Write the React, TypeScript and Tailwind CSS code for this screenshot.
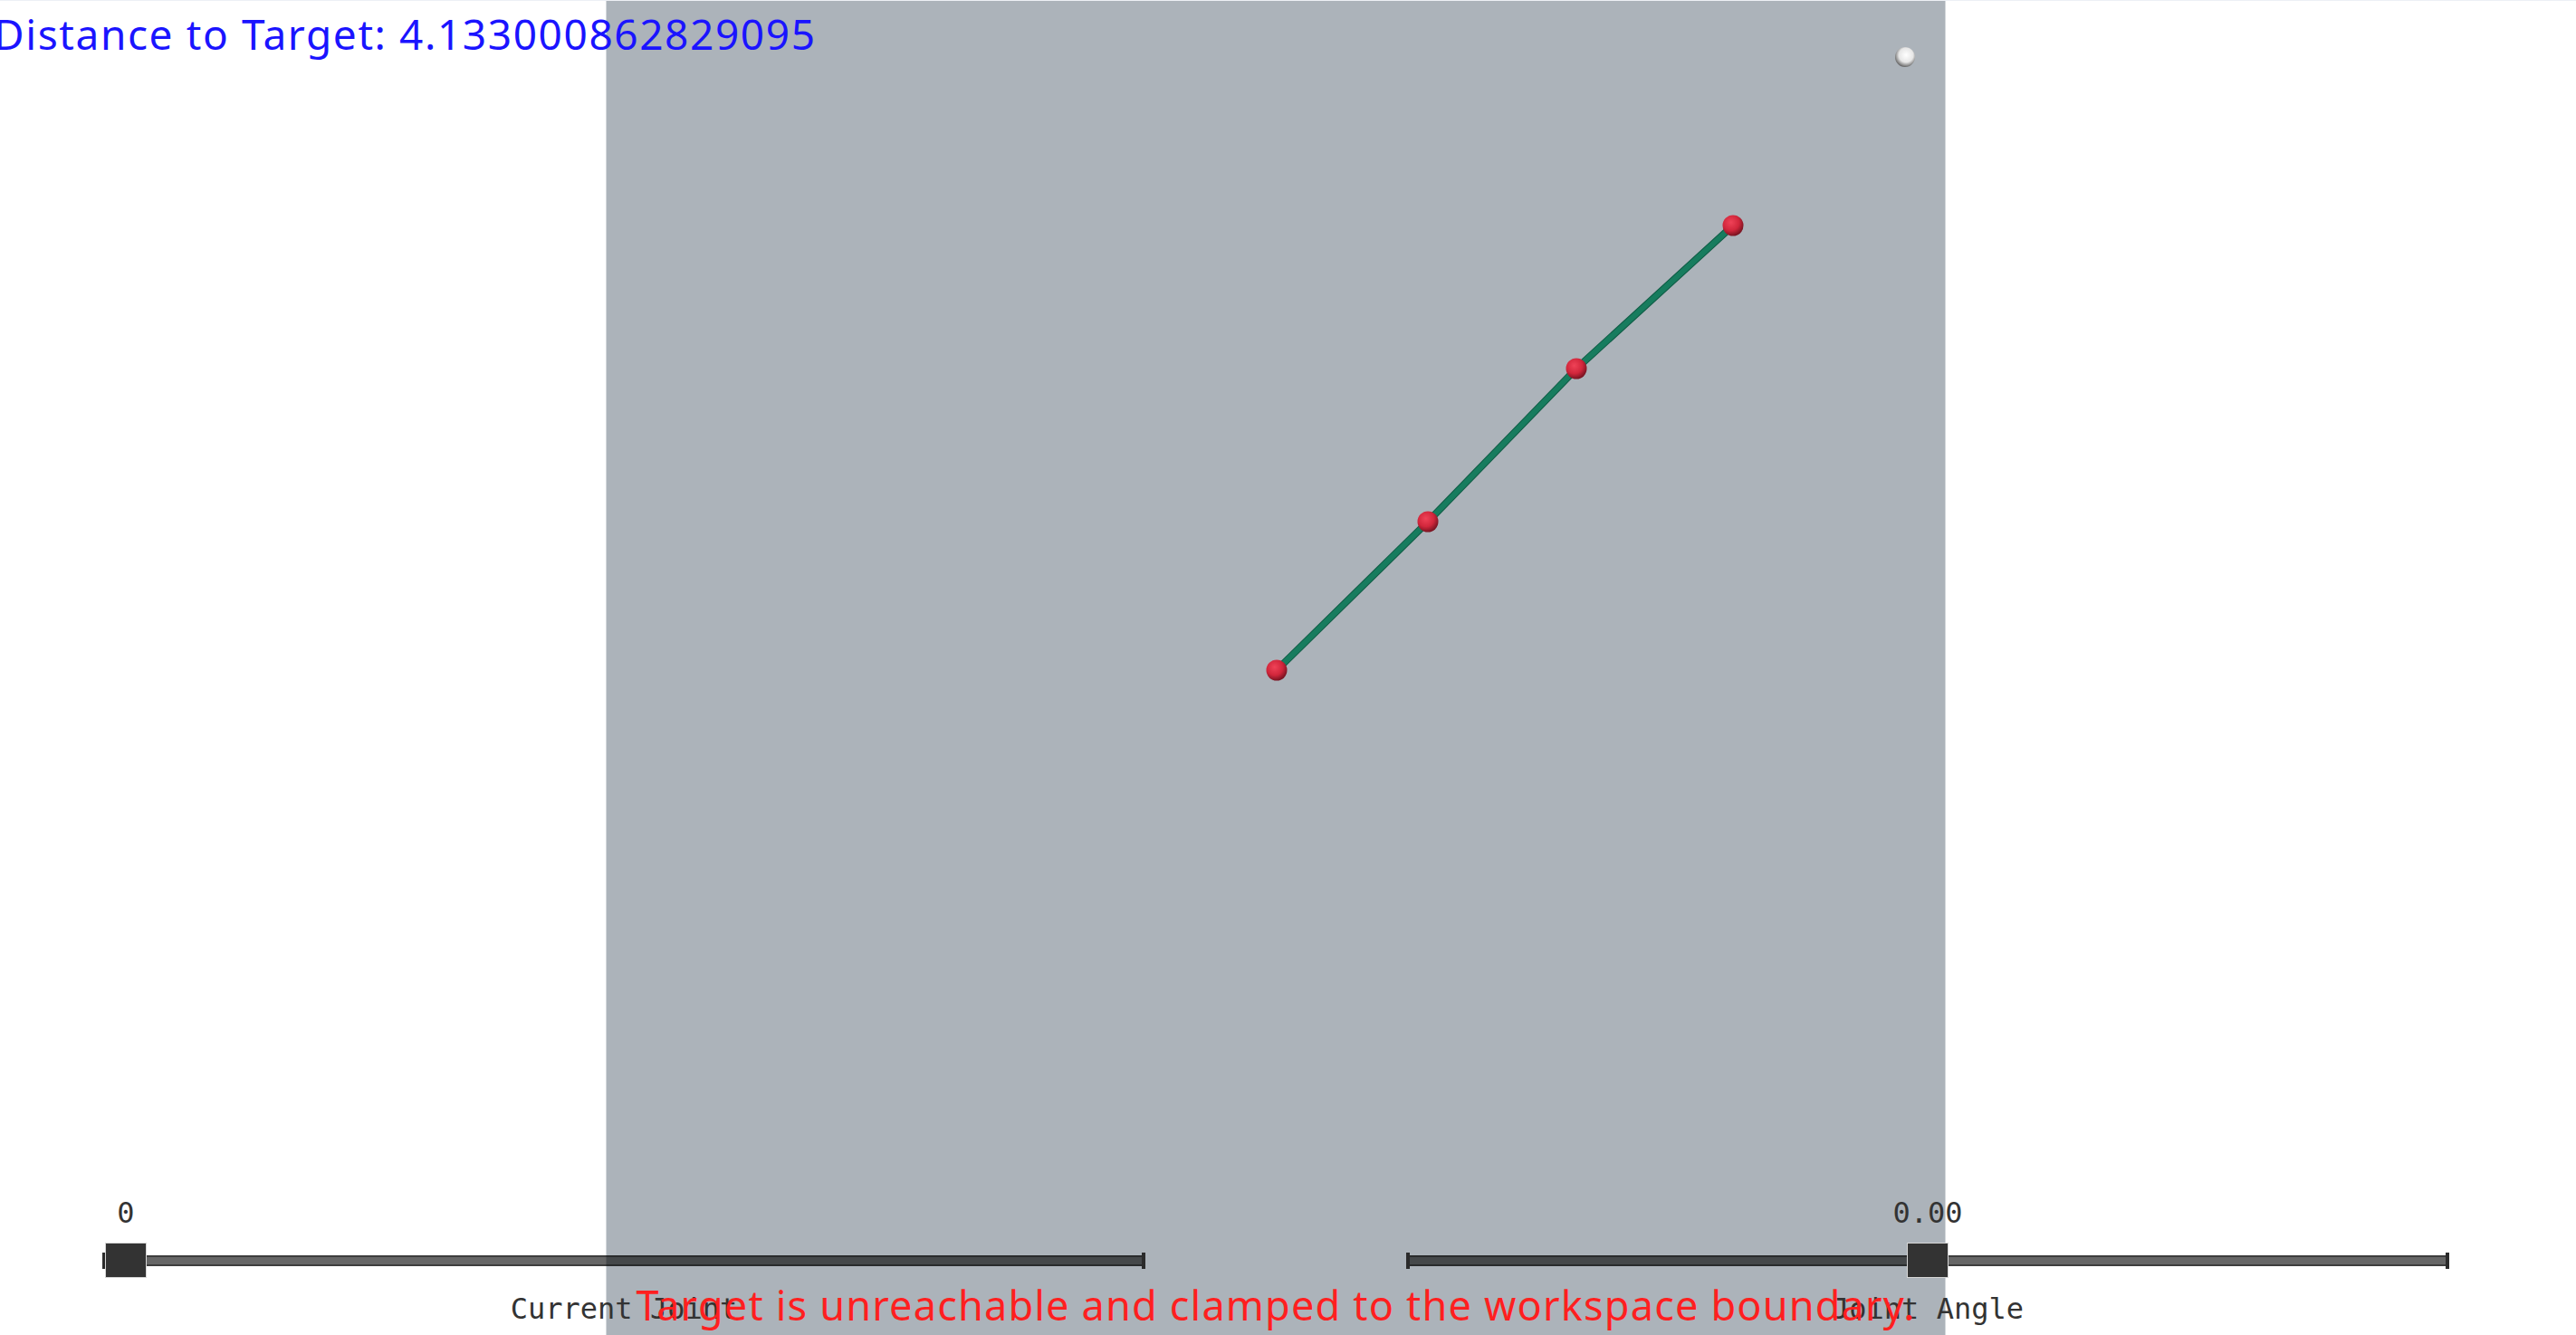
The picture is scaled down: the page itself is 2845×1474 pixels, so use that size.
import React from "react"

const joints = [
  { x: 740, y: 739 },
  { x: 907, y: 575 },
  { x: 1071, y: 406 },
  { x: 1244, y: 248 },
]

function Slider({ value, caption, pos }: { value: string; caption: string; pos: number }) {
  return (
    <div className="flex flex-col w-[1152px] font-['DejaVu_Sans_Mono',monospace] text-[32px] leading-none text-[#333]">
      <div className="relative h-[50px]">
        <div
          className="absolute top-0 -translate-x-1/2 whitespace-nowrap"
          style={{ left: `calc(26px + ${pos} * (100% - 52px))` }}
        >
          {value}
        </div>
      </div>
      <div className="relative h-[37px]">
        <div className="absolute inset-x-0 top-[13px] h-[12px] bg-black/60 border-y-2 border-black/40" />
        <div className="absolute left-0 top-[10px] w-[4px] h-[18px] bg-[#2b2b2b]" />
        <div className="absolute right-0 top-[10px] w-[4px] h-[18px] bg-[#2b2b2b]" />
        <div
          className="absolute top-0 w-[44px] h-[37px] -translate-x-1/2 bg-[#333] outline outline-1 outline-[#d6d6d6]"
          style={{ left: `calc(26px + ${pos} * (100% - 52px))` }}
        />
      </div>
      <div className="pt-[19px] text-center whitespace-nowrap">{caption}</div>
    </div>
  )
}

export default function App() {
  return (
    <div className="relative w-[2845px] h-[1474px] overflow-hidden bg-white border-t border-[#edf0f5]">
      {/* p5 canvas */}
      <div className="absolute top-0 left-[669px] w-[1480px] h-full bg-[#acb3ba] border-x border-[#d4d8dc]">
        <svg className="absolute inset-0" width="1480" height="1474">
          <defs>
            <radialGradient id="red" cx="40%" cy="35%" r="65%">
              <stop offset="0%" stopColor="#ef4257" />
              <stop offset="60%" stopColor="#d1263b" />
              <stop offset="100%" stopColor="#7a1422" />
            </radialGradient>
            <radialGradient id="white" cx="55%" cy="40%" r="65%">
              <stop offset="0%" stopColor="#ffffff" />
              <stop offset="55%" stopColor="#e6e6e6" />
              <stop offset="100%" stopColor="#4a4a4a" />
            </radialGradient>
          </defs>
          <polyline
            points={joints.map((p) => `${p.x},${p.y}`).join(" ")}
            fill="none"
            stroke="#0f5c45"
            strokeWidth="8"
          />
          <polyline
            points={joints.map((p) => `${p.x},${p.y}`).join(" ")}
            fill="none"
            stroke="#177c5e"
            strokeWidth="6"
          />
          {joints.map((p, i) => (
            <circle key={i} cx={p.x} cy={p.y} r="11.5" fill="url(#red)" />
          ))}
          <circle cx="1434" cy="62" r="11" fill="url(#white)" />
        </svg>
      </div>

      <div className="absolute top-[4px] left-[-7px] whitespace-nowrap text-[46px] leading-[64px] tracking-[1.6px] text-[#1a14ff] font-['Noto_Sans',sans-serif]">
        Distance to Target: 4.133000862829095
      </div>

      <div className="absolute top-[1322px] left-[113px] flex gap-[288px]">
        <Slider value="0" caption="Current Joint" pos={0} />
        <Slider value="0.00" caption="Joint Angle" pos={0.5} />
      </div>

      <div className="absolute top-[1408px] left-[669px] w-[1480px] text-center whitespace-nowrap text-[45px] leading-[64px] tracking-[1.2px] text-[#ff1f1f] font-['Noto_Sans',sans-serif]">
        Target is unreachable and clamped to the workspace boundary.
      </div>
    </div>
  )
}
